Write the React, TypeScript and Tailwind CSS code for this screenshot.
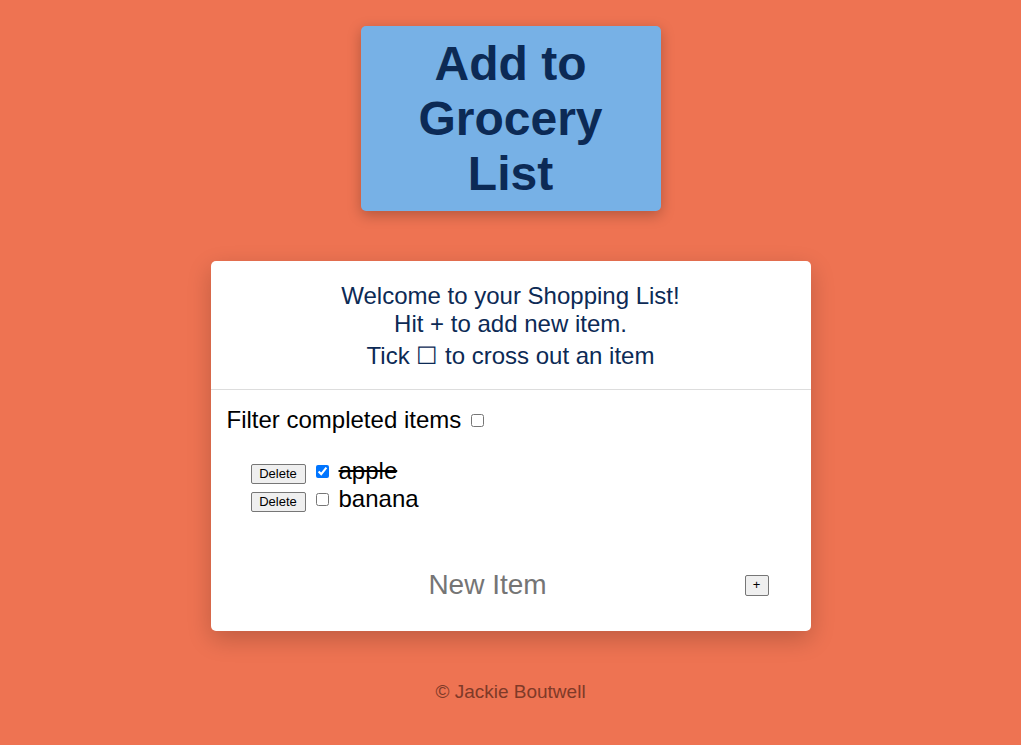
import React, { useState } from 'react';

type Item = { id: number; name: string; done: boolean };

function App() {
  const [items, setItems] = useState<Item[]>([
    { id: 1, name: 'apple', done: true },
    { id: 2, name: 'banana', done: false },
  ]);
  const [filter, setFilter] = useState(false);
  const [text, setText] = useState('');

  const shown = filter ? items.filter((i) => !i.done) : items;

  return (
    <div className="flex min-h-[745px] flex-col items-center bg-[#ee7352] font-['Liberation_Sans',Arial,sans-serif]">
      <button className="mt-[26px] h-[185px] w-[300px] rounded-[5px] bg-[#77b1e6] text-[48px] font-bold leading-[55px] text-[#0c2a55] shadow-[0_4px_14px_rgba(0,0,0,0.25)]">
        Add to
        <br />
        Grocery
        <br />
        List
      </button>

      <div className="mt-[50px] w-[600px] rounded-[5px] bg-white shadow-[0_8px_24px_rgba(0,0,0,0.2)]">
        <div className="border-b border-[#dddddd] pt-[21px] pb-[19px] text-center text-[24px] leading-[28px] text-[#0c2a55]">
          <p>Welcome to your Shopping List!</p>
          <p>Hit + to add new item.</p>
          <p className="mt-[4px]">Tick ☐ to cross out an item</p>
        </div>

        <div className="px-[16px] pt-[16px]">
          <label className="flex items-center text-[24px] leading-[28px] text-black">
            Filter completed items
            <input
              type="checkbox"
              className="ml-[10px] h-[13px] w-[13px]"
              checked={filter}
              onChange={(e) => setFilter(e.target.checked)}
            />
          </label>

          <ul className="mt-[23px] pl-[24px]">
            {shown.map((item) => (
              <li key={item.id} className="flex items-center text-[24px] leading-[28px] text-black">
                <button
                  className="mt-[6px] h-[20px] w-[55px] rounded-[2px] border border-[#767676] bg-[#efefef] text-[13px] leading-[16px]"
                  onClick={() => setItems(items.filter((i) => i.id !== item.id))}
                >
                  Delete
                </button>
                <input
                  type="checkbox"
                  className="ml-[10px] mr-[10px] h-[13px] w-[13px]"
                  checked={item.done}
                  onChange={() =>
                    setItems(items.map((i) => (i.id === item.id ? { ...i, done: !i.done } : i)))
                  }
                />
                <span className={item.done ? 'line-through' : ''}>{item.name}</span>
              </li>
            ))}
          </ul>

          <div className="mt-[47px] flex items-center pb-[21px]">
            <input
              className="h-[50px] flex-1 pl-[14px] text-center text-[28px] text-[#333] outline-none placeholder:text-[#757575]"
              placeholder="New Item"
              value={text}
              onChange={(e) => setText(e.target.value)}
            />
            <button
              className="mr-[26px] ml-[10px] h-[21px] w-[24px] rounded-[2px] border border-[#767676] bg-[#efefef] text-[13px] leading-[16px]"
              onClick={() => {
                if (!text.trim()) return;
                setItems([...items, { id: Date.now(), name: text.trim(), done: false }]);
                setText('');
              }}
            >
              +
            </button>
          </div>
        </div>
      </div>

      <footer className="mt-[47px] text-[19px] text-[#7f3a28]">© Jackie Boutwell</footer>
    </div>
  );
}

export default App;
